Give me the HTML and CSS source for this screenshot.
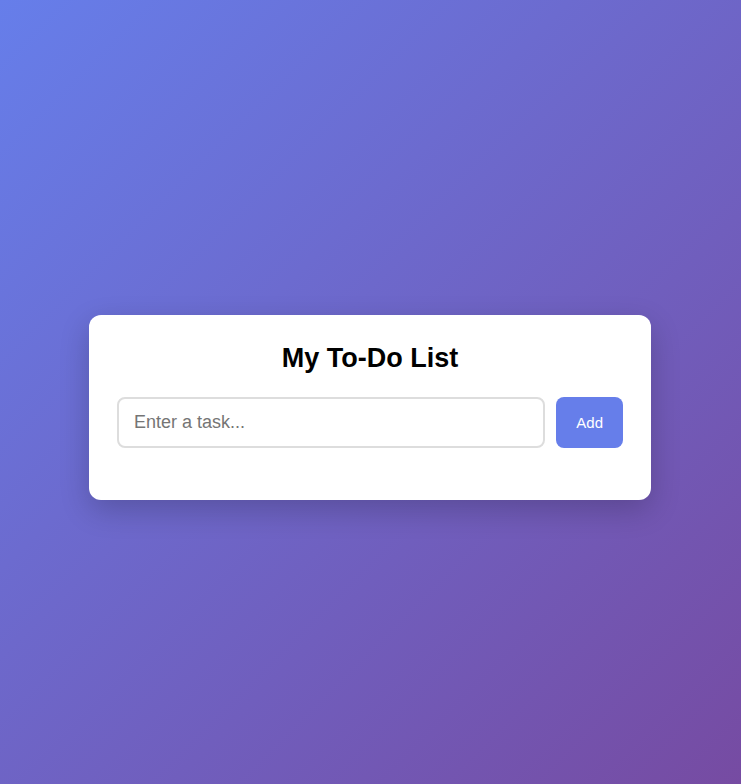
FILE: index.html
```html
<!DOCTYPE html>
<html lang="en">
<head>
    <meta charset="UTF-8">
    <meta name="viewport" content="width=device-width, initial-scale=1.0">
    <title>My To-Do List</title>
    <link rel="stylesheet" href="styles.css">
</head>
<body>
    <div class="container">
        <h1>My To-Do List</h1>
        <!-- 输入框和添加按钮 -->
        <div class="input-row">
            <input type="text" id="taskInput" placeholder="Enter a task...">
            <button id="addBtn">Add</button>
        </div>
        <!-- 任务列表 -->
        <ul id="taskList" class="task-list"></ul>
    </div>
</body>
</html>
```
FILE: styles.css
```css
* {
    box-sizing: border-box;
}
html, body {
    height: 100%;
}
body {
    margin: 0;
    padding-top: 30px;
    padding-right: 1px;
    font-family: "Liberation Sans", Arial, sans-serif;
    background: linear-gradient(135deg, #667eea 0%, #764ba2 100%);
    display: flex;
    justify-content: center;
    align-items: center;
}
.container {
    width: 562px;
    background-color: #fff;
    border-radius: 12px;
    padding: 28px 28px 28px;
    box-shadow: 0 10px 30px rgba(0, 0, 0, 0.2);
}
h1 {
    margin: 0 0 23px;
    font-size: 27px;
    line-height: 31px;
    text-align: center;
    color: #000;
}
.input-row {
    display: flex;
    gap: 11px;
}
.input-row input {
    flex: 1;
    min-width: 0;
    padding: 13px 15px;
    font-family: inherit;
    font-size: 18px;
    line-height: 21px;
    border: 2px solid #ddd;
    border-radius: 8px;
    outline: none;
}
.input-row input::placeholder {
    color: #757575;
}
.input-row button {
    padding: 0 20px;
    border: none;
    border-radius: 8px;
    background-color: #667eea;
    color: #fff;
    font-family: inherit;
    font-size: 15px;
    cursor: pointer;
}
.task-list {
    list-style: none;
    margin: 24px 0 0;
    padding: 0;
}
```
